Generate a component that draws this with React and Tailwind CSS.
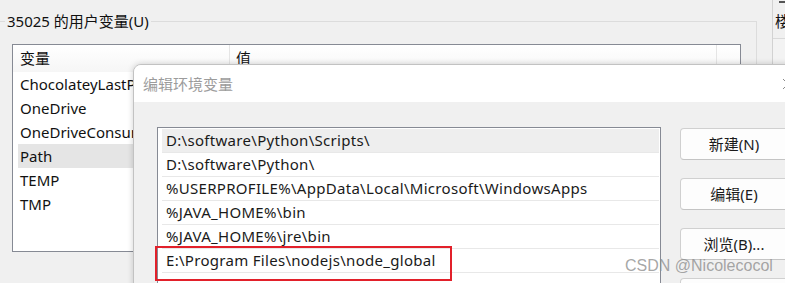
import React from 'react'

const userVars = ['ChocolateyLastPathUpdate', 'OneDrive', 'OneDriveConsumer', 'Path', 'TEMP', 'TMP']

const pathEntries = [
  'D:\\software\\Python\\Scripts\\',
  'D:\\software\\Python\\',
  '%USERPROFILE%\\AppData\\Local\\Microsoft\\WindowsApps',
  '%JAVA_HOME%\\bin',
  '%JAVA_HOME%\\jre\\bin',
  'E:\\Program Files\\nodejs\\node_global',
  '',
]

function Button({ children }) {
  return (
    <div className="w-[108px] h-[32px] flex items-center justify-center rounded-[4px] border border-[#d0d0d0] border-b-[#c4c4c4] bg-[#fdfdfd] text-[#1b1b1b]">
      {children}
    </div>
  )
}

export default function App() {
  return (
    <div
      className="relative flex w-[785px] h-[283px] overflow-hidden bg-[#f0f0f0] text-[15px] text-[#111]"
      style={{ fontFamily: '"Noto Sans", "Noto Sans CJK SC", sans-serif' }}
    >
      {/* Back window: user variables */}
      <div className="w-[773px] shrink-0 border-r border-[#d2d2d2]">
        <div className="mt-[21px] ml-[-8px] w-[765px] h-[400px] border-t border-r border-l border-[#dcdcdc]">
          <div className="-mt-[11px] ml-[12px] w-fit px-[2px] leading-[20px] bg-[#f0f0f0]">35025 的用户变量(U)</div>

          <div className="mt-[13px] ml-[19px] w-[729px] h-[208px] border border-[#868a94] bg-white">
            {/* header */}
            <div className="flex h-[27px] bg-gradient-to-b from-white to-[#f6f6f6]">
              <div className="w-[217px] pl-[7px] flex items-center border-r border-[#e5e5e5]">变量</div>
              <div className="w-[487px] pl-[6px] flex items-center border-r border-[#e5e5e5]">值</div>
            </div>
            {userVars.map((v) => (
              <div key={v} className="h-[24px] flex items-center pl-[5px]">
                <div
                  className={
                    'h-full w-full flex items-center pl-[2px] ' + (v === 'Path' ? 'bg-[#e5e5e5]' : '')
                  }
                >
                  {v}
                </div>
              </div>
            ))}
          </div>
        </div>
      </div>

      {/* Right neighbour panel edge */}
      <div className="flex-1 flex flex-col">
        <div className="h-[39px] border-b border-[#d9d9d9] relative">
          <div className="absolute top-[1px] left-[6px] w-[10px] h-[2px] bg-[#555]" />
          <div className="pl-[2px] pt-[11px] leading-[20px]">楼</div>
        </div>
        <div className="flex-1 bg-[#f3f3f3]" />
      </div>

      {/* Front dialog */}
      <div className="absolute left-[133px] top-[64px] w-[700px] h-[260px] rounded-tl-[8px] border border-[#c2c2c2] bg-[#f0f0f0] shadow-[0_0_6px_rgba(0,0,0,0.18)] overflow-hidden">
        <div className="h-[37px] flex items-center bg-white">
          <div className="w-[648px] pl-[9px] text-[#9c9c9c] leading-[20px]">编辑环境变量</div>
          <svg width="12" height="12" viewBox="0 0 12 12" className="mt-[1px]">
            <path d="M1 1 L11 11 M11 1 L1 11" stroke="#8a8a8a" strokeWidth="1" fill="none" />
          </svg>
        </div>

        <div className="flex pt-[25px] pl-[23px]">
          <div className="w-[504px] h-[200px] border border-[#868a94] bg-white pt-[1px] pl-[4px] pr-[1px] tracking-[0.3px]">
            {pathEntries.map((p, i) => (
              <div
                key={i}
                className={
                  'h-[24px] flex items-center pl-[4px] border-b border-[#e8e8e8] text-[#1a1a1a] ' +
                  (i === 0 ? 'bg-[#eeeeee]' : '')
                }
              >
                {p}
              </div>
            ))}
          </div>

          <div className="ml-[19px] mt-[1px] flex flex-col gap-[18px]">
            <Button>新建(N)</Button>
            <Button>编辑(E)</Button>
            <Button>浏览(B)...</Button>
            <Button>删除(D)</Button>
          </div>
        </div>
      </div>

      {/* Red highlight annotation */}
      <div className="absolute left-[155px] top-[246px] w-[297px] h-[35px] border-2 border-[#e2202a]" />

      {/* Watermark */}
      <div
        className="absolute left-[625px] top-[258px] text-[16px] leading-[16px] text-[#8f8f8f]/80"
        style={{ fontFamily: '"Liberation Sans", Arial, sans-serif' }}
      >
        CSDN @Nicolecocol
      </div>
    </div>
  )
}
